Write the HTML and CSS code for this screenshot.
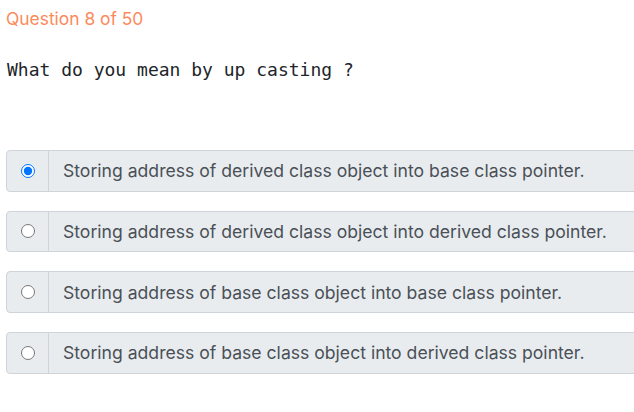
FILE: index.html
```html
<!DOCTYPE html>
<html>
<head>
<meta charset="utf-8">
<link rel="stylesheet" href="styles.css">
</head>
<body>
<div class="quiz">
  <div class="counter">Question 8 of 50</div>
  <pre class="question">What do you mean by up casting ?</pre>
  <div class="options">
    <label class="option">
      <span class="radio-cell"><input type="radio" name="q" checked></span>
      <span class="opt-text">Storing address of derived class object into base class pointer.</span>
    </label>
    <label class="option">
      <span class="radio-cell"><input type="radio" name="q"></span>
      <span class="opt-text">Storing address of derived class object into derived class pointer.</span>
    </label>
    <label class="option">
      <span class="radio-cell"><input type="radio" name="q"></span>
      <span class="opt-text">Storing address of base class object into base class pointer.</span>
    </label>
    <label class="option">
      <span class="radio-cell"><input type="radio" name="q"></span>
      <span class="opt-text">Storing address of base class object into derived class pointer.</span>
    </label>
  </div>
</div>
</body>
</html>
```
FILE: styles.css
```css
html, body {
  margin: 0;
  padding: 0;
  overflow: hidden;
  background: #fff;
}
.quiz {
  padding: 8px 6px 0 6px;
  width: 660px;
  font-family: Inter, "Noto Sans", sans-serif;
}
.counter {
  color: #fb8a5c;
  font-size: 17.4px;
  line-height: 22px;
  padding-left: 0;
}
.question {
  margin: 27px 0 0 0;
  padding-left: 1px;
  font-family: "DejaVu Sans Mono", monospace;
  font-size: 18px;
  line-height: 26px;
  color: #212529;
}
.options {
  margin-top: 67px;
  display: flex;
  flex-direction: column;
  gap: 19px;
}
.option {
  display: flex;
  align-items: stretch;
  height: 41.67px;
  box-sizing: border-box;
  border: 1px solid #ced4da;
  border-radius: 4px;
  background: #e9ecef;
  color: #495057;
  font-size: 17.6px;
}
.radio-cell {
  width: 41px;
  border-right: 1px solid #ced4da;
  display: flex;
  align-items: center;
  justify-content: center;
}
.radio-cell input {
  margin: 0;
  width: 14px;
  height: 14px;
}
.opt-text {
  display: flex;
  align-items: center;
  padding-left: 14px;
}
```
